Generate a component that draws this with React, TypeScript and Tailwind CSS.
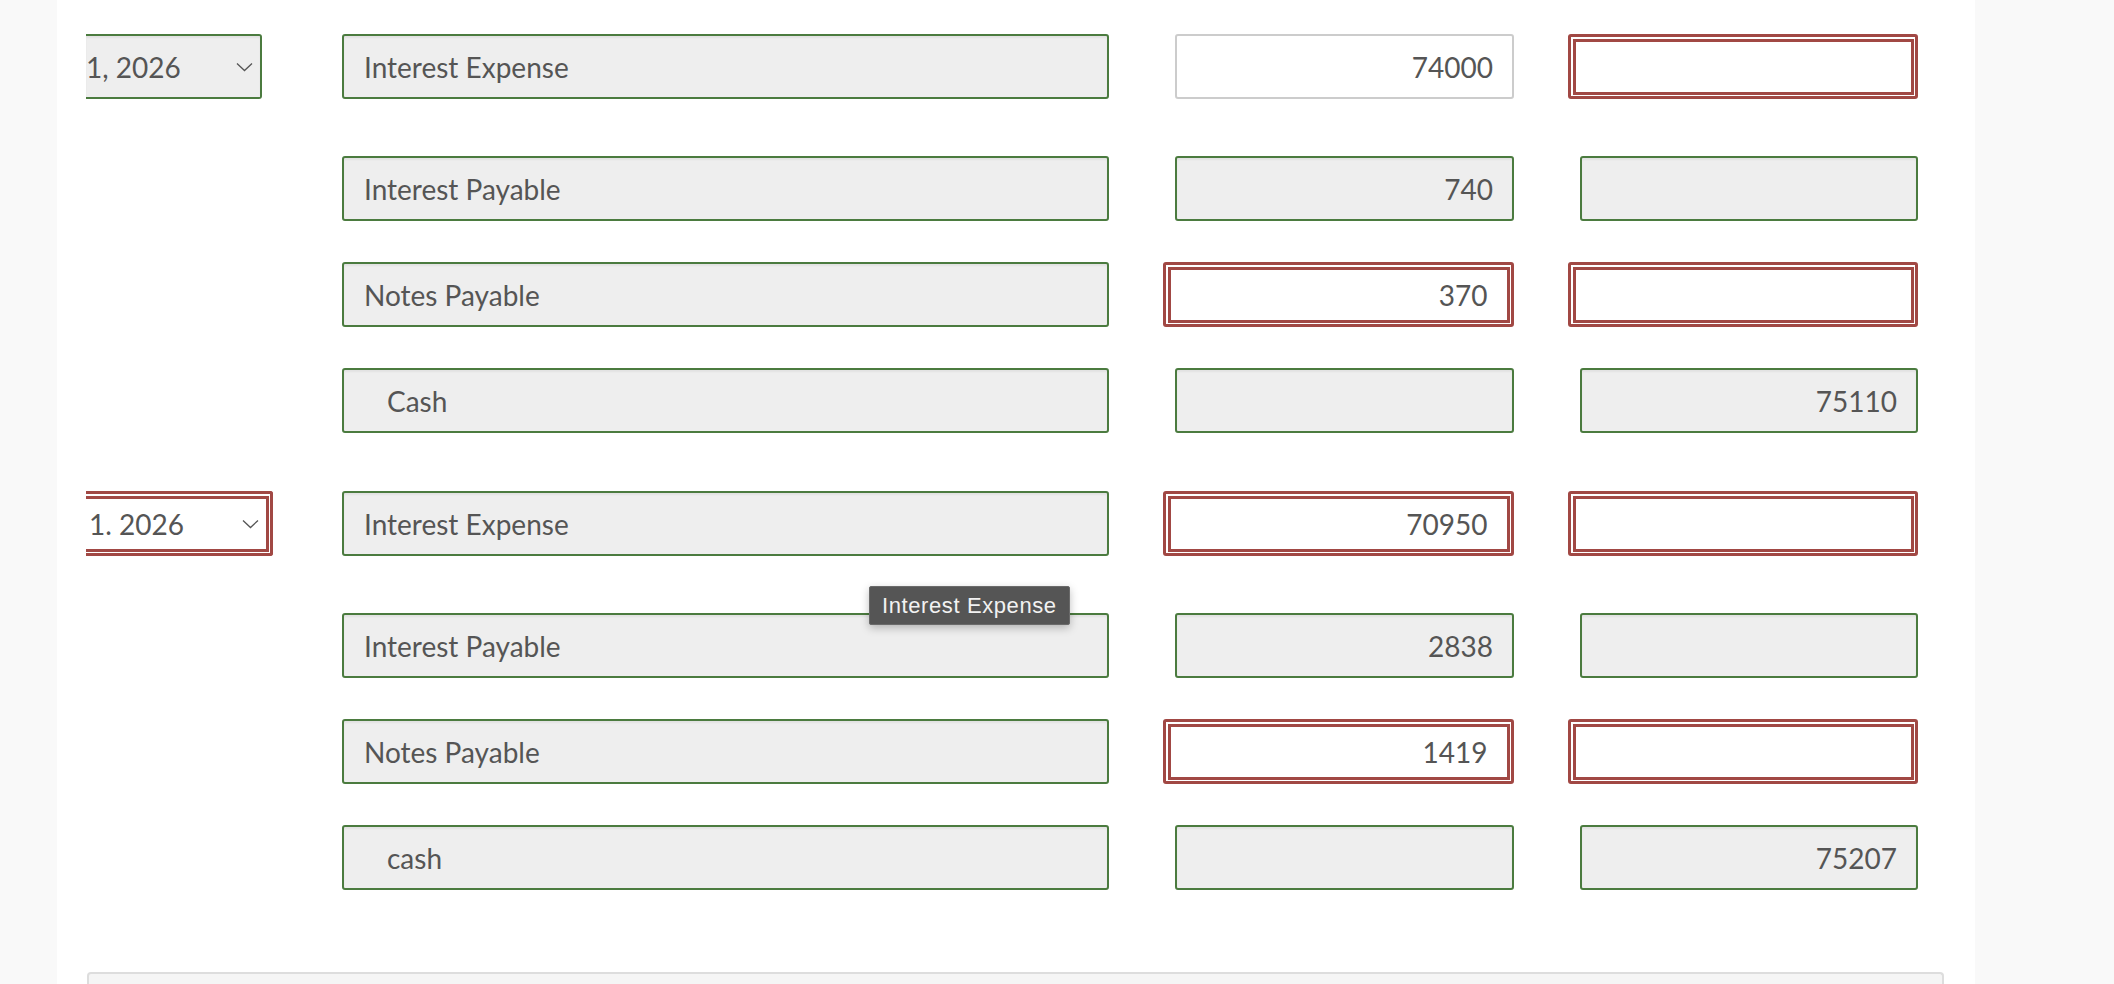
import React from 'react';

type Tone = 'ok' | 'bad' | 'focus';

interface Line {
  account: string;
  indent?: boolean;
  debit: string;
  debitTone: Tone;
  credit: string;
  creditTone: Tone;
}

interface Entry {
  date: string;
  dateTone: Tone;
  lines: Line[];
}

const entries: Entry[] = [
  {
    date: '1, 2026',
    dateTone: 'ok',
    lines: [
      { account: 'Interest Expense', debit: '74000', debitTone: 'focus', credit: '', creditTone: 'bad' },
      { account: 'Interest Payable', debit: '740', debitTone: 'ok', credit: '', creditTone: 'ok' },
      { account: 'Notes Payable', debit: '370', debitTone: 'bad', credit: '', creditTone: 'bad' },
      { account: 'Cash', indent: true, debit: '', debitTone: 'ok', credit: '75110', creditTone: 'ok' },
    ],
  },
  {
    date: '1. 2026',
    dateTone: 'bad',
    lines: [
      { account: 'Interest Expense', debit: '70950', debitTone: 'bad', credit: '', creditTone: 'bad' },
      { account: 'Interest Payable', debit: '2838', debitTone: 'ok', credit: '', creditTone: 'ok' },
      { account: 'Notes Payable', debit: '1419', debitTone: 'bad', credit: '', creditTone: 'bad' },
      { account: 'cash', indent: true, debit: '', debitTone: 'ok', credit: '75207', creditTone: 'ok' },
    ],
  },
];

const font = { fontFamily: 'Lato, "Open Sans", sans-serif' };

function Chevron() {
  return (
    <svg width="17" height="10" viewBox="0 0 17 10" fill="none" className="shrink-0">
      <path d="M1 1.5L8.5 8.5L16 1.5" stroke="#555" strokeWidth="1.3" />
    </svg>
  );
}

function AmountBox({ value, tone, width }: { value: string; tone: Tone; width: string }) {
  if (tone === 'bad') {
    return (
      <div className="h-[65px] w-full rounded-[3px] border-[3px] border-[#a14844] bg-white p-[1.5px]">
        <div className="flex h-full items-center justify-end border-[3px] border-[#a14844] pr-[19px] text-[28px] text-[#555]">
          {value}
        </div>
      </div>
    );
  }
  const look =
    tone === 'focus'
      ? 'border-[#cccccc] bg-white'
      : 'border-[#4b7b3f] bg-[#eeeeee] shadow-[inset_0_2px_2px_rgba(0,0,0,0.05)]';
  return (
    <div className={`flex h-[65px] ${width} items-center justify-end rounded-[3px] border-2 pr-[19px] text-[28px] text-[#555] ${look}`}>
      {value}
    </div>
  );
}

function DateSelect({ value, tone }: { value: string; tone: Tone }) {
  if (tone === 'bad') {
    return (
      <div className="h-[65px] w-[187px] rounded-r-[3px] border-y-[3px] border-r-[3px] border-[#a14844] bg-white py-[1.5px] pr-[1.5px]">
        <div className="flex h-full items-center justify-between border-y-[3px] border-r-[3px] border-[#a14844] pl-[3px] pr-[7px] text-[28px] text-[#555]">
          <span>{value}</span>
          <Chevron />
        </div>
      </div>
    );
  }
  return (
    <div className="flex h-[65px] w-[176px] items-center justify-between rounded-r-[3px] border-y-2 border-r-2 border-[#4b7b3f] bg-[#eeeeee] pr-[7px] text-[28px] text-[#555] shadow-[inset_0_2px_2px_rgba(0,0,0,0.05)]">
      <span>{value}</span>
      <Chevron />
    </div>
  );
}

function LineRow({ line, entry, first, tooltip }: { line: Line; entry: Entry; first: boolean; tooltip?: boolean }) {
  return (
    <div className="flex items-start">
      <div className="w-[256px] shrink-0">{first && <DateSelect value={entry.date} tone={entry.dateTone} />}</div>
      <div className="relative w-[767px] shrink-0">
        <div
          className={`flex h-[65px] items-center rounded-[3px] border-2 border-[#4b7b3f] bg-[#eeeeee] text-[28px] text-[#555] shadow-[inset_0_2px_2px_rgba(0,0,0,0.05)] ${
            line.indent ? 'pl-[43px]' : 'pl-[20px]'
          }`}
        >
          {line.account}
        </div>
        {tooltip && (
          <div
            className="absolute left-[527px] top-[-27px] rounded-[2px] border border-[#6a6a6a] bg-[#555555] px-[12px] py-[5px] text-[22px] leading-[27px] tracking-[0.6px] text-[#f2f2f2] shadow-[0_3px_8px_rgba(0,0,0,0.25)]"
            style={{ fontFamily: '"Liberation Sans", Arial, sans-serif' }}
          >
            Interest Expense
          </div>
        )}
      </div>
      <div className="ml-[54px] flex w-[351px] shrink-0 justify-end">
        <AmountBox value={line.debit} tone={line.debitTone} width="w-[339px]" />
      </div>
      <div className="ml-[54px] flex w-[350px] shrink-0 justify-end">
        <AmountBox value={line.credit} tone={line.creditTone} width="w-[338px]" />
      </div>
    </div>
  );
}

export default function App() {
  return (
    <div className="flex h-[984px] w-full overflow-hidden bg-[#f9f9f9]" style={font}>
      <div className="ml-[57px] flex w-[1918px] shrink-0 flex-col bg-white">
        <div className="flex shrink-0 flex-col gap-[58px] pl-[29px] pt-[34px]">
          {entries.map((entry, ei) => (
            <div key={ei} className="flex flex-col">
              {entry.lines.map((line, li) => (
                <div key={li} className={li === 0 ? '' : li === 1 ? 'mt-[57px]' : 'mt-[41px]'}>
                  <LineRow line={line} entry={entry} first={li === 0} tooltip={ei === 1 && li === 1} />
                </div>
              ))}
            </div>
          ))}
        </div>
        <div className="ml-[30px] mt-[82px] h-[60px] w-[1857px] shrink-0 rounded-t-[4px] border-x-2 border-t-2 border-[#dddddd] bg-[#f5f5f5]" />
      </div>
    </div>
  );
}
